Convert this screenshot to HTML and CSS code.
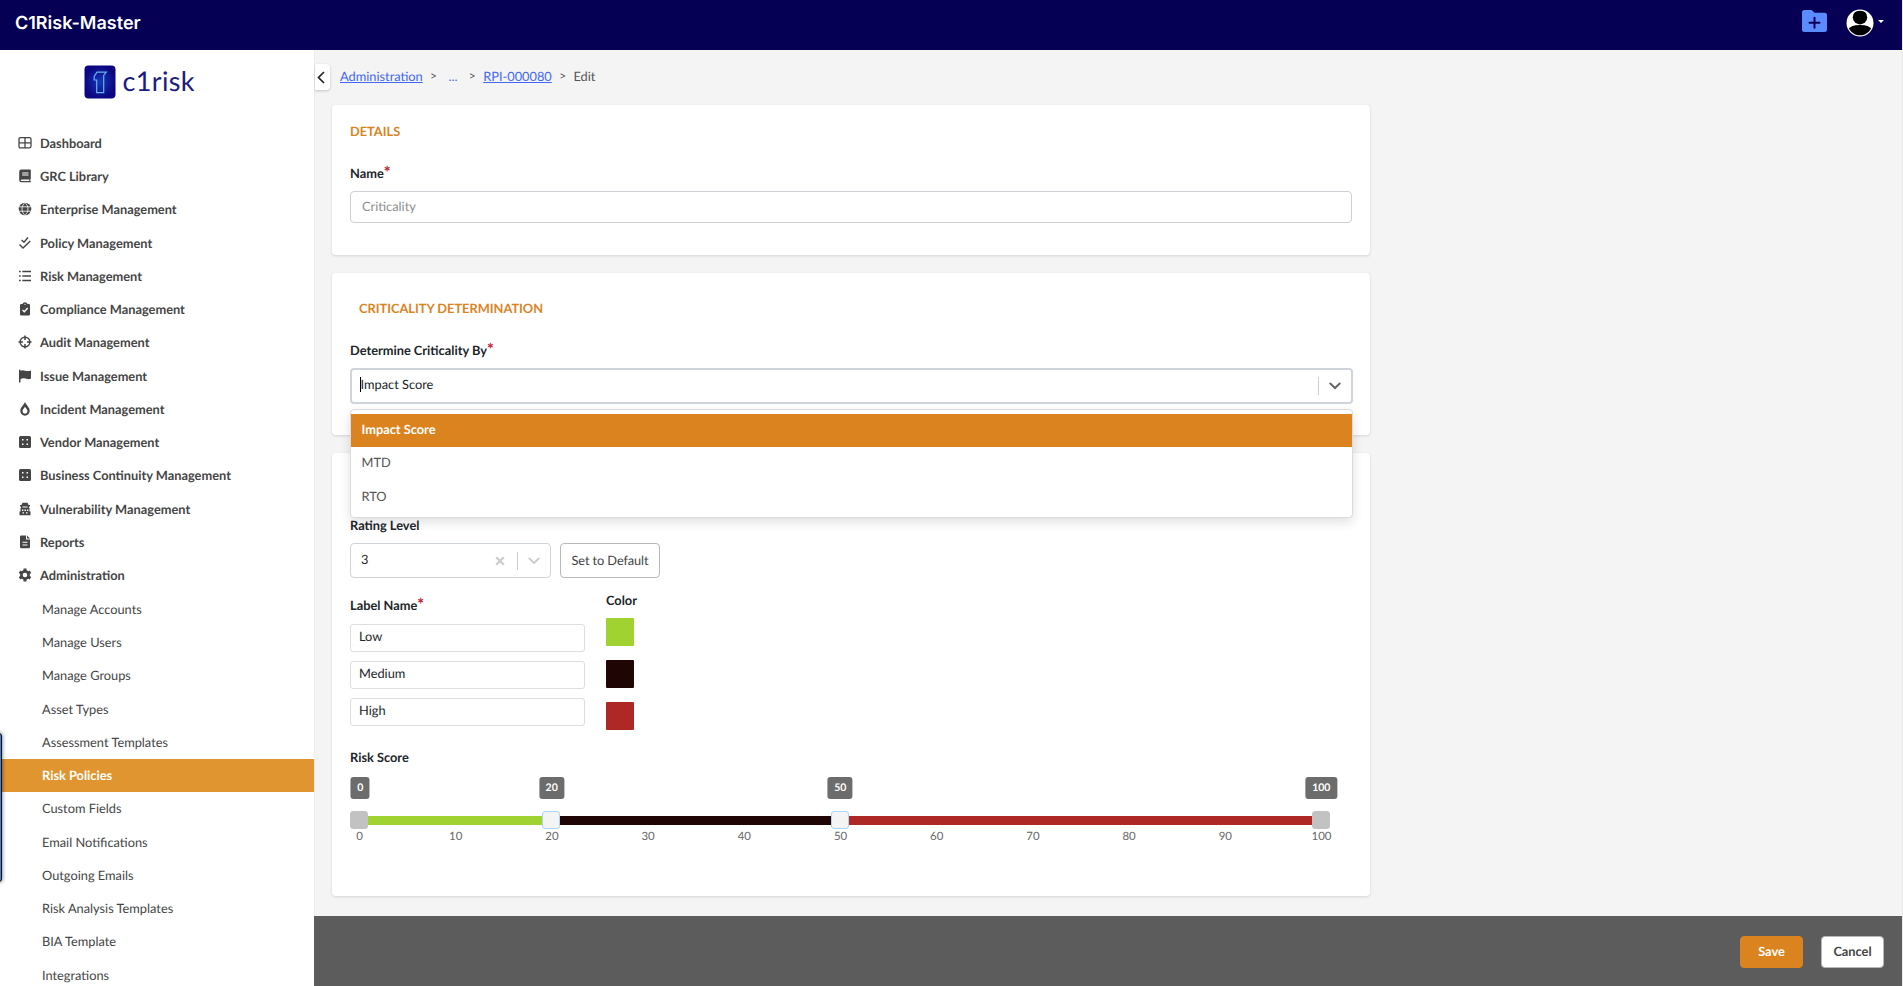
FILE: index.html
```
<!DOCTYPE html>
<html lang="en">
<head>
<meta charset="utf-8">
<title>C1Risk-Master</title>
<link rel="stylesheet" href="styles.css">
</head>
<body>
<div class="app">
  <header class="topbar">
    <h1 class="brand">C1Risk-Master</h1>
    <div class="topbar-actions">
      <svg class="folder" viewBox="0 0 25 22"><path d="M2.500 0H9.500L12.500 2.800H22.500Q25 2.800 25 5.300V19.500Q25 22 22.500 22H2.500Q0 22 0 19.500V2.500Q0 0 2.500 0Z" fill="#5b8cff"/><path d="M12.500 7.700V17.700M7.500 12.700H17.500" stroke="#060054" stroke-width="2" stroke-linecap="round"/></svg>
      <svg class="avatar" viewBox="0 0 28 28"><defs><clipPath id="face"><circle cx="14" cy="14" r="12.300"/></clipPath></defs><circle cx="14" cy="14" r="13.500" fill="#fff"/><g clip-path="url(#face)"><circle cx="14" cy="8.200" r="7.200"/><path d="M2 21Q4 16 14 16T26 21Q24 27.500 14 27.500T2 21Z"/></g></svg>
      <svg class="caret" viewBox="0 0 6 3"><path d="M0 0H6L3 3Z" fill="#fff"/></svg>
    </div>
  </header>
  <div class="body">
    <nav class="sidebar">
      <div class="logo">
        <svg viewBox="0 0 112 36"><defs><radialGradient id="glow"><stop offset="0" stop-color="#1638b8"/><stop offset="1" stop-color="#0c0580"/></radialGradient></defs><rect x="0.500" y="1.500" width="31" height="33" rx="4" fill="url(#glow)"/><path d="M13 8.200H22.300L19.700 11.500V28.600H12.700V16H10.200V12.500Z" fill="none" stroke="#64b4ea" stroke-width="1.200"/><text class="logo-text" x="38.500" y="26.600" textLength="72" lengthAdjust="spacing">c1risk</text></svg>
      </div>
      <ul class="menu">
        <li><svg viewBox="0 0 14 14"><path d="M2.500 1.700H11.500Q13 1.700 13 3.200V10.300Q13 11.800 11.500 11.800H2.500Q1 11.800 1 10.300V3.200Q1 1.700 2.500 1.700ZM7 1.700V11.800M1 6.800H13" fill="none" stroke="currentColor" stroke-width="1.300"/></svg>Dashboard</li>
        <li><svg viewBox="0 0 14 14"><path fill-rule="evenodd" d="M3.500 .5H12Q12.800 .5 12.800 1.300V9.800L12.300 10.300V12H12.800V13.300H3.500Q1.200 13.300 1.200 11V2.800Q1.200 .5 3.500 .5ZM4.200 3.500V4.500H10.500V3.500ZM4.200 5.500V6.500H10.500V5.500ZM3.600 10.500Q2.700 10.500 2.700 11.200T3.600 12H11.300V10.500Z"/></svg>GRC Library</li>
        <li><svg viewBox="0 0 14 14"><circle cx="7" cy="7" r="6.300"/><path d="M.7 4.800H13.300M.7 9.200H13.300M7 .7C3 4 3 10 7 13.300C11 10 11 4 7 .7Z" fill="none" stroke="#fff" stroke-width=".8"/></svg>Enterprise Management</li>
        <li><svg viewBox="0 0 14 14"><path d="M3.500 4L6 6.200L10 1.500M1.500 8.500L5 12L12.300 5" fill="none" stroke="currentColor" stroke-width="1.400"/></svg>Policy Management</li>
        <li><svg viewBox="0 0 14 14"><path d="M4.300 2.500H13M4.300 7H13M4.300 11.500H13M1 2.500H2.700M1 7H2.700M1 11.500H2.700" stroke="currentColor" stroke-width="1.500"/></svg>Risk Management</li>
        <li><svg viewBox="0 0 14 14"><path d="M3.200 2H4.500Q5 .3 7 .3T9.500 2H10.800Q12 2 12 3.200V12.200Q12 13.400 10.800 13.400H3.200Q2 13.400 2 12.200V3.200Q2 2 3.200 2Z"/><path d="M4.500 8L6.300 9.800L9.700 6" fill="none" stroke="#fff" stroke-width="1.300"/><circle cx="7" cy="2.300" r=".6" fill="#fff"/></svg>Compliance Management</li>
        <li><svg viewBox="0 0 14 14"><circle cx="7" cy="7" r="4.800" fill="none" stroke="currentColor" stroke-width="1.500"/><path d="M7 .5V5M7 9V13.500M.5 7H5M9 7H13.500" stroke="currentColor" stroke-width="1.500"/></svg>Audit Management</li>
        <li><svg viewBox="0 0 14 14"><path d="M1 .8H2.500V1.800Q4.500 .8 7 1.700T13 1.500V9.500Q10.500 10.700 7.800 9.600T2.500 10V13.400H1Z"/></svg>Issue Management</li>
        <li><svg viewBox="0 0 14 14"><path fill-rule="evenodd" d="M7 0C8 3 11.700 5 11.700 9A4.700 4.700 0 0 1 2.300 9C2.300 5 6 3 7 0ZM7 4.500C6.500 6.200 4.500 7 4.500 9.200A2.500 2.500 0 0 0 9.500 9.200C9.500 7 7.500 6.200 7 4.500Z"/></svg>Incident Management</li>
        <li><svg viewBox="0 0 14 14"><rect x="1" y="1" width="12" height="12" rx="1.500"/><path d="M4 4.700H5.500M8.500 4.700H10M4 9.300H5.500M8.500 9.300H10" stroke="#fff" stroke-width="1.600"/></svg>Vendor Management</li>
        <li><svg viewBox="0 0 14 14"><rect x="1" y="1" width="12" height="12" rx="1.500"/><path d="M4 4.700H5.500M8.500 4.700H10M4 9.300H5.500M8.500 9.300H10" stroke="#fff" stroke-width="1.600"/></svg>Business Continuity Management</li>
        <li><svg viewBox="0 0 14 14"><path fill-rule="evenodd" d="M4.500 .8H9.500L10.500 3H12V4.500H11V6H11.500V9.500H12.500V13.200H1.500V9.500H2.500V6H3V4.500H2V3H3.500ZM4.500 4.500V5.500H9.500V4.500ZM4 7.500V9H5.300V7.500ZM6.500 7.500V9H8V7.500ZM9 7.500V9H10.300V7.500ZM4.500 10.300V11.500H6V10.300ZM8 10.300V11.500H9.500V10.300Z"/></svg>Vulnerability Management</li>
        <li><svg viewBox="0 0 14 14"><path fill-rule="evenodd" d="M3.200 .5H8V4.500H12V12Q12 13.200 10.800 13.200H3.200Q2 13.200 2 12V1.700Q2 .5 3.200 .5ZM9 .5L12 3.500H9ZM4.500 6.800V7.700H9.500V6.800ZM4.500 9.500V10.400H9.500V9.500Z"/></svg>Reports</li>
        <li><svg viewBox="0 0 14 14"><circle cx="7" cy="7" r="3.600" fill="none" stroke="currentColor" stroke-width="2.600"/><g stroke="currentColor" stroke-width="3"><path d="M7 .6V3M7 11V13.400M1.500 3.800L3.500 5M10.500 9L12.500 10.200M1.500 10.200L3.500 9M10.500 5L12.500 3.800"/></g></svg>Administration</li>
        <li class="sub">Manage Accounts</li>
        <li class="sub">Manage Users</li>
        <li class="sub">Manage Groups</li>
        <li class="sub">Asset Types</li>
        <li class="sub">Assessment Templates</li>
        <li class="sub active">Risk Policies</li>
        <li class="sub">Custom Fields</li>
        <li class="sub">Email Notifications</li>
        <li class="sub">Outgoing Emails</li>
        <li class="sub">Risk Analysis Templates</li>
        <li class="sub">BIA Template</li>
        <li class="sub">Integrations</li>
      </ul>
      <div class="edge-widget"></div>
    </nav>
    <main class="main">
      <div class="scroll">
        <div class="crumb-row">
          <div class="collapse"><svg viewBox="0 0 8 13"><path d="M7 1L1.500 6.500L7 12" fill="none" stroke="#212529" stroke-width="1.700"/></svg></div>
          <div class="crumbs"><a>Administration</a><i>&gt;</i><a class="dots">...</a><i>&gt;</i><a>RPI-000080</a><i>&gt;</i><span>Edit</span></div>
        </div>
        <section class="card details">
          <h2>DETAILS</h2>
          <label class="label">Name<b>*</b></label>
          <div class="input name-input">Criticality</div>
        </section>
        <section class="card determination">
          <h2>CRITICALITY DETERMINATION</h2>
          <label class="label">Determine Criticality By<b>*</b></label>
          <div class="select focused">
            <span class="value"><span class="cursor"></span>Impact Score</span>
            <span class="divider"></span>
            <svg class="chev" viewBox="0 0 12 8"><path d="M1.300 1.500L6 6L10.700 1.500" fill="none" stroke="#666" stroke-width="2" stroke-linecap="round"/></svg>
            <div class="options">
              <div class="option chosen">Impact Score</div>
              <div class="option">MTD</div>
              <div class="option">RTO</div>
            </div>
          </div>
        </section>
        <section class="card rating">
          <label class="label">Rating Level</label>
          <div class="level-row">
            <div class="select level">
              <span class="value">3</span>
              <svg class="clear" viewBox="0 0 10 10"><path d="M1.200 1.200L8.800 8.800M8.800 1.200L1.200 8.800" stroke="#ccc" stroke-width="2.200"/></svg>
              <span class="divider"></span>
              <svg class="chev" viewBox="0 0 12 8"><path d="M1.300 1.500L6 6L10.700 1.500" fill="none" stroke="#ccc" stroke-width="1.900" stroke-linecap="round"/></svg>
            </div>
            <button class="default-btn">Set to Default</button>
          </div>
          <div class="levels">
            <div class="names">
              <label class="label">Label Name<b>*</b></label>
              <div class="input small">Low</div>
              <div class="input small">Medium</div>
              <div class="input small">High</div>
            </div>
            <div class="colors">
              <label class="label">Color</label>
              <div class="swatch low"></div>
              <div class="swatch medium"></div>
              <div class="swatch high"></div>
            </div>
          </div>
          <label class="label score-label">Risk Score</label>
          <div class="slider">
            <span class="tip" style="left:0.1%">0</span><span class="tip" style="left:20%">20</span><span class="tip" style="left:50%">50</span><span class="tip" style="left:100%">100</span>
            <div class="track"><span class="low" style="width:20%"></span><span class="medium" style="width:30%"></span><span class="high" style="width:50%"></span></div>
            <span class="handle fixed" style="left:0"></span><span class="handle" style="left:20%"></span><span class="handle" style="left:50%"></span><span class="handle fixed" style="left:100%"></span>
            <span class="mark" style="left:0">0</span><span class="mark" style="left:10%">10</span><span class="mark" style="left:20%">20</span><span class="mark" style="left:30%">30</span><span class="mark" style="left:40%">40</span><span class="mark" style="left:50%">50</span><span class="mark" style="left:60%">60</span><span class="mark" style="left:70%">70</span><span class="mark" style="left:80%">80</span><span class="mark" style="left:90%">90</span><span class="mark" style="left:100%">100</span>
          </div>
        </section>
      </div>
      <footer class="footer"><button class="save">Save</button><button class="cancel">Cancel</button></footer>
    </main>
  </div>
</div>
</body>
</html>
```
FILE: styles.css
```
* { box-sizing: border-box; }
body { margin: 0; background: #e8e8e8; font: 12.8px/20px Lato, sans-serif; color: #212529; text-rendering: geometricPrecision; }
.app { width: 1902px; height: 986px; display: flex; flex-direction: column; overflow: hidden; }
.topbar { flex: none; height: 50px; background: #060054; display: flex; align-items: center; justify-content: space-between; padding: 0 18px 0 15px; }
.brand { margin: 0; padding-bottom: 2px; font: 600 18px/24px Inter, sans-serif; color: #fff; }
.topbar-actions { display: flex; align-items: flex-start; height: 50px; padding-top: 10px; }
.folder { width: 25px; height: 22px; margin-right: 20px; }
.avatar { width: 28px; height: 28px; margin: -1px 4px 0 -1px; }
.caret { width: 6px; height: 3px; margin-top: 10px; }
.body { flex: 1; min-height: 0; display: flex; }
.sidebar { position: relative; flex: none; width: 314px; background: #fff; overflow: hidden; }
.logo { height: 77.25px; padding: 14px 0 0 84px; }
.logo svg { display: block; width: 112px; height: 36px; }
.logo-text { font: 400 27px Lato, sans-serif; fill: #1b1b80; }
.menu { list-style: none; margin: 0; padding: 0; }
.menu li { height: 33.25px; display: flex; align-items: center; gap: 8px; padding: 0 0 2px 18px; font-weight: 700; color: #454545; white-space: nowrap; }
.menu svg { width: 14px; height: 14px; fill: currentColor; }
.menu .sub { font-weight: 400; padding-left: 42px; padding-bottom: 1px; }
.menu .active { background: #e09530; color: #fff; font-weight: 700; }
.edge-widget { position: absolute; left: -8px; top: 683px; width: 10px; height: 149px; background: #4a80d8; border: 1px solid #111; border-radius: 3px; box-shadow: 0 0 4px rgba(0,0,0,.6); }
.main { flex: 1; min-width: 0; display: flex; flex-direction: column; background: #f4f4f4; border-left: 1px solid #ececec; }
.scroll { flex: 1; min-height: 0; }
.crumb-row { display: flex; height: 55px; padding-top: 14px; }
.collapse { width: 15px; height: 26px; background: #fff; border-radius: 0 4px 4px 0; box-shadow: 0 1px 3px rgba(0,0,0,.2); display: flex; align-items: center; padding-left: 2px; }
.collapse svg { width: 8px; height: 13px; }
.crumbs { display: flex; align-items: center; height: 24px; padding-left: 10px; color: #555; }
.crumbs a { color: #4267f5; text-decoration: underline; }
.crumbs i { font-style: normal; font-size: 12px; width: 21.700px; text-align: center; }
.crumbs .dots { margin: 0 4px; text-decoration: none; }
.card { width: 1038px; margin: 0 0 18px 17px; background: #fff; border-radius: 4px; box-shadow: 0 1px 3px rgba(0,0,0,.13); padding: 0 18px; }
.card h2 { margin: 0; font: 700 12.800px/20px Lato, sans-serif; color: #db841f; }
.label { display: block; height: 20px; font-weight: 700; white-space: nowrap; }
.label b { color: #c4283a; font-size: 16px; line-height: 0; position: relative; top: 0; }
.input { border: 1px solid #cfcfd6; border-radius: 4px; background: #fff; }
.details { height: 150px; padding-top: 16px; }
.details h2 { margin-bottom: 22px; }
.name-input { height: 32px; margin-top: 8px; padding: 4px 11px; color: #8e8e8e; }
.determination { height: 162px; padding-top: 25px; }
.determination h2 { margin: 0 0 22px 9px; }
.select { position: relative; display: flex; align-items: center; height: 35px; border: 1px solid #ced4da; border-radius: 4px; }
.value { flex: 1; padding-bottom: 4px; }
.divider { width: 1px; height: 18px; background: #ccc; }
.focused { margin: 8px -.5px 0; border: 2px solid #ced4da; height: 36px; padding: 0 10px 0 8px; }
.cursor { display: inline-block; width: 1px; height: 15px; margin-right: 0; background: #000; vertical-align: -3px; }
.focused .chev { width: 12px; height: 8px; margin-left: 10px; }
.options { position: absolute; z-index: 2; left: -2px; right: -2px; top: 39px; height: 109px; padding-top: 4px; background: #fff; border: 1px solid #d8dbe0; border-radius: 4px; box-shadow: 0 4px 11px rgba(0,0,0,.13); }
.option { height: 33.25px; line-height: 31px; padding-left: 11px; color: #555; }
.chosen { background: #db841f; color: #fff; font-weight: 700; }
.rating { height: 443px; margin-bottom: 0; padding-top: 62px; }
.level-row { display: flex; gap: 9px; margin-top: 8px; }
.level { width: 201px; padding: 0 10px; }
.level .clear { width: 10px; height: 10px; margin-right: 12px; }
.level .chev { width: 12px; height: 8px; margin-left: 10px; }
button { font: 400 12.800px/20px Lato, sans-serif; text-rendering: geometricPrecision; padding: 0 0 2px; color: #444; background: #fff; border: 1px solid #b8b8b8; border-radius: 4px; white-space: nowrap; }
.default-btn { width: 100px; height: 35px; letter-spacing: -.1px; }
.levels { display: flex; gap: 21px; height: 152px; }
.names { width: 235px; padding-top: 17px; }
.names .label { margin-bottom: 9px; }
.small { height: 28px; margin-bottom: 9px; padding: 1px 8px; border-color: #dedede; border-radius: 3px; }
.colors { padding-top: 12px; }
.colors .label { margin-bottom: 8px; }
.swatch { width: 28px; height: 28px; border-radius: 1px; margin-bottom: 14px; }
.low { background: #a0d332; }
.medium { background: #200505; }
.high { background: #ae2926; }
.score-label { margin-top: 17px; }
.slider { position: relative; margin: 10px 31px 0 9px; height: 60px; }
.track { position: absolute; left: 0; right: 0; top: 39px; height: 9px; display: flex; }
.tip, .handle, .mark { position: absolute; transform: translateX(-50%); }
.tip { top: 0; height: 22px; padding: 0 6.500px; margin-left: .3px; border-radius: 3px; background: #6c6c6c; color: #fff; font: 700 10.500px/22px Lato, sans-serif; }
.handle { top: 34px; width: 18px; height: 18px; border-radius: 3px; background: #f4f4f4; border: 1px solid #abd5fa; }
.fixed { background: #c2c2c2; border-color: #c2c2c2; }
.mark { top: 51.500px; margin-left: .5px; font-size: 11.400px; line-height: 16px; color: #666; }
.footer { flex: none; height: 70px; background: #5c5c5c; display: flex; justify-content: flex-end; gap: 18px; padding: 20px 18px 0 0; margin-left: -1px; }
.footer button { width: 63px; height: 32px; font-weight: 700; }
.footer .save { background: #db841f; border-color: #db841f; color: #fff; }
```
